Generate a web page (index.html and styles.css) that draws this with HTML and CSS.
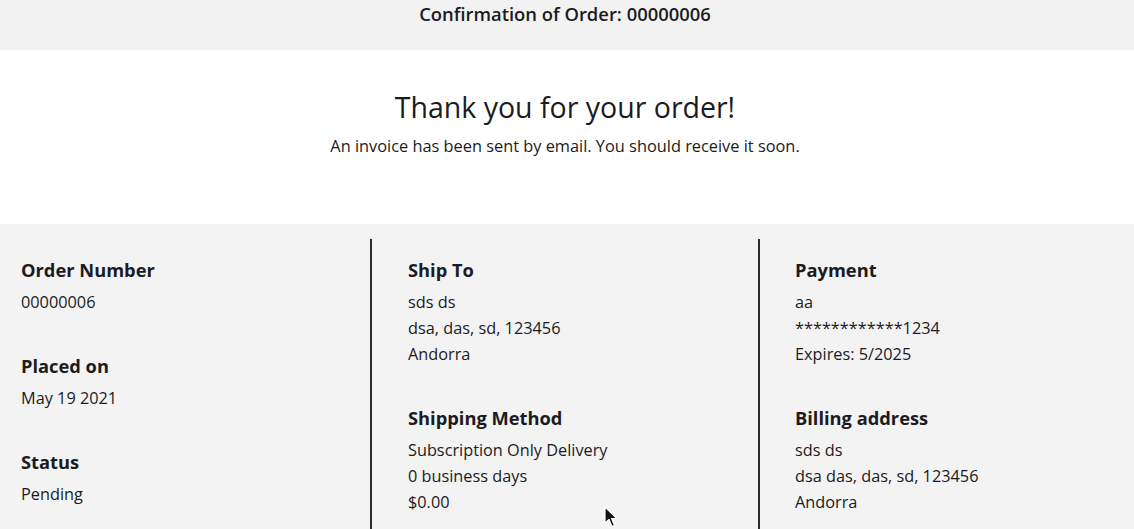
FILE: index.html
```html
<!DOCTYPE html>
<html lang="en">
<head>
<meta charset="utf-8">
<title>Confirmation of Order: 00000006</title>
<link rel="stylesheet" href="styles.css">
</head>
<body>
<header class="topbar">
  <h1 class="topbar-title">Confirmation of Order: 00000006</h1>
</header>
<section class="thanks">
  <h2 class="thanks-title">Thank you for your order!</h2>
  <p class="thanks-text">An invoice has been sent by email. You should receive it soon.</p>
</section>
<section class="details">
  <div class="col col-first">
    <div class="block">
      <h3 class="block-title">Order Number</h3>
      <p class="line">00000006</p>
    </div>
    <div class="block">
      <h3 class="block-title">Placed on</h3>
      <p class="line">May 19 2021</p>
    </div>
    <div class="block">
      <h3 class="block-title">Status</h3>
      <p class="line">Pending</p>
    </div>
  </div>
  <div class="col col-mid">
    <div class="block">
      <h3 class="block-title">Ship To</h3>
      <p class="line">sds ds</p>
      <p class="line">dsa, das, sd, 123456</p>
      <p class="line">Andorra</p>
    </div>
    <div class="block">
      <h3 class="block-title">Shipping Method</h3>
      <p class="line">Subscription Only Delivery</p>
      <p class="line">0 business days</p>
      <p class="line">$0.00</p>
    </div>
  </div>
  <div class="col col-last">
    <div class="block">
      <h3 class="block-title">Payment</h3>
      <p class="line">aa</p>
      <p class="line">************1234</p>
      <p class="line">Expires: 5/2025</p>
    </div>
    <div class="block">
      <h3 class="block-title">Billing address</h3>
      <p class="line">sds ds</p>
      <p class="line">dsa das, das, sd, 123456</p>
      <p class="line">Andorra</p>
    </div>
  </div>
</section>
<svg class="cursor" width="14" height="22" viewBox="0 0 14 22" aria-hidden="true">
  <path d="M1 1 L1 17 L5 13.5 L8 20.5 L10.5 19.4 L7.6 12.6 L12.8 12.6 Z" fill="#111" stroke="#fff" stroke-width="1.2" stroke-linejoin="round"/>
</svg>
</body>
</html>
```
FILE: styles.css
```css
* { box-sizing: border-box; }
html, body {
  margin: 0;
  padding: 0;
  background: #f2f2f3;
  color: #1b1b21;
  font-family: "Open Sans", "Noto Sans", sans-serif;
  overflow: hidden;
  height: 529px;
}
body { position: relative; }
.topbar {
  height: 50px;
  background: #f2f2f3;
  display: flex;
  justify-content: center;
  padding: 1px 4px 0 0;
}
.topbar-title {
  margin: 0;
  font-size: 18.4px;
  font-weight: 600;
  line-height: 26px;
}
.thanks {
  background: #ffffff;
  height: 174px;
  text-align: center;
  padding: 38px 4px 0 0;
}
.thanks-title {
  margin: 0 0 8px;
  font-size: 28.5px;
  font-weight: 400;
  line-height: 38px;
}
.thanks-text {
  margin: 0;
  font-size: 16.35px;
  line-height: 24px;
}
.details {
  background: #f3f3f4;
  display: grid;
  grid-template-columns: 372px 388px 1fr;
  padding-top: 15px;
  align-items: start;
  height: 305px;
}
.col {
  padding-top: 18px;
  height: 300px;
}
.col-first { padding-left: 21px; border-right: 2px solid #2a2a2e; }
.col-mid { padding-left: 36px; border-right: 2px solid #2a2a2e; }
.col-last { padding-left: 35px; }
.block { margin-bottom: 38px; }
.block-title {
  margin: 0 0 6px;
  font-size: 18.3px;
  font-weight: 700;
  line-height: 26px;
}
.line {
  margin: 0;
  font-size: 16.3px;
  line-height: 26px;
}
.cursor {
  position: absolute;
  left: 604px;
  top: 506px;
}
```
